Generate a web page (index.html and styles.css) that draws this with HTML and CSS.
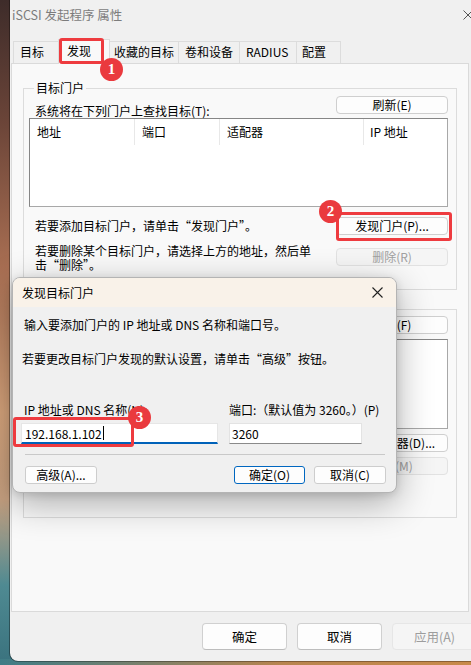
FILE: index.html
```html
<!DOCTYPE html>
<html lang="zh-CN">
<head>
<meta charset="utf-8">
<title>iSCSI 发起程序 属性</title>
<link rel="stylesheet" href="styles.css">
</head>
<body>
<div class="window">
  <div class="titlebar">
    <span class="title">iSCSI 发起程序 属性</span>
    <svg class="win-close" width="10" height="10" viewBox="0 0 10 10"><path d="M0.5 0.5 L9.5 9.5 M9.5 0.5 L0.5 9.5" stroke="#555" stroke-width="1" fill="none"/></svg>
  </div>
  <div class="tabs">
    <div class="tab t1">目标</div>
    <div class="tab t2 active">发现</div>
    <div class="tab t3">收藏的目标</div>
    <div class="tab t4">卷和设备</div>
    <div class="tab t5">RADIUS</div>
    <div class="tab t6">配置</div>
  </div>
  <div class="panel">
    <fieldset class="group g1">
      <legend>目标门户</legend>
      <div class="row top-row">
        <span class="label">系统将在下列门户上查找目标(T):</span>
        <button class="btn side-btn up">刷新(E)</button>
      </div>
      <div class="listbox lb1">
        <div class="lhead">
          <span class="col c1">地址</span>
          <span class="col c2">端口</span>
          <span class="col c3">适配器</span>
          <span class="col c4">IP 地址</span>
        </div>
      </div>
      <div class="row act-row">
        <span class="label">若要添加目标门户，请单击“发现门户”。</span>
        <button class="btn side-btn">发现门户(P)...</button>
      </div>
      <div class="row act-row del-row">
        <span class="label wrap">若要删除某个目标门户，请选择上方的地址，然后单击“删除”。</span>
        <button class="btn side-btn disabled">删除(R)</button>
      </div>
    </fieldset>
    <div class="group g2">
      <div class="row top-row">
        <span class="label"></span>
        <button class="btn side-btn">刷新(F)</button>
      </div>
      <div class="listbox lb2"></div>
      <div class="row act-row">
        <span class="label"></span>
        <button class="btn side-btn">添加服务器(D)...</button>
      </div>
      <div class="row act-row del-row2">
        <span class="label"></span>
        <button class="btn side-btn disabled">删除(M)</button>
      </div>
    </div>
  </div>
  <div class="footer">
    <button class="fbtn">确定</button>
    <button class="fbtn">取消</button>
    <button class="fbtn disabled">应用(A)</button>
  </div>

  <div class="dialog">
    <div class="dtitle">
      <span>发现目标门户</span>
      <svg class="dclose" width="11" height="11" viewBox="0 0 11 11"><path d="M0.5 0.5 L10.5 10.5 M10.5 0.5 L0.5 10.5" stroke="#222" stroke-width="1.1" fill="none"/></svg>
    </div>
    <div class="dbody">
      <p class="dtext t-a">输入要添加门户的 IP 地址或 DNS 名称和端口号。</p>
      <p class="dtext t-b">若要更改目标门户发现的默认设置，请单击“高级”按钮。</p>
      <div class="fields">
        <div class="field f-ip">
          <span class="flabel">IP 地址或 DNS 名称(N):</span>
          <div class="input active-input">192.168.1.102<span class="caret"></span></div>
        </div>
        <div class="field f-port">
          <span class="flabel">端口:（默认值为 3260。）(P)</span>
          <div class="input">3260</div>
        </div>
      </div>
      <div class="sep"></div>
      <div class="dbtns">
        <button class="dbtn">高级(A)...</button>
        <span class="grow"></span>
        <button class="dbtn default">确定(O)</button>
        <button class="dbtn">取消(C)</button>
      </div>
    </div>
  </div>

  <div class="mark box1"></div>
  <div class="mark box2"></div>
  <div class="mark box3"></div>
  <div class="badge b1">1</div>
  <div class="badge b2">2</div>
  <div class="badge b3">3</div>
</div>
</body>
</html>
```
FILE: styles.css
```css
html, body {
  margin: 0;
  padding: 0;
  width: 471px;
  height: 665px;
  overflow: hidden;
}
body {
  font-family: "Noto Sans CJK SC", "Liberation Sans", sans-serif;
  font-size: 12px;
  color: #000;
  background:
    linear-gradient(to right, #3f7c86 0%, #6f7f70 25%, #b8844e 60%, #c98a4a 100%) bottom / 100% 6px no-repeat,
    linear-gradient(to bottom, #3e2c2a 0%, #6a4438 18%, #a86e52 40%, #d6a47c 62%, #c6a080 75%, #4f8a92 88%, #3a727e 100%);
}
button {
  font-family: inherit;
  font-size: 12px;
  color: #000;
  padding: 0;
  margin: 0;
  cursor: default;
}
.window {
  position: relative;
  margin-left: 10px;
  width: 481px;
  height: 661px;
  background: #f0f0f0;
  border-bottom-left-radius: 8px;
  box-shadow: -1px 0 0 rgba(0,0,0,0.35), 0 1px 0 rgba(0,0,0,0.3);
  display: flex;
  flex-direction: column;
}
.titlebar {
  height: 41px;
  display: flex;
  align-items: flex-start;
  padding-left: 2px;
}
.title {
  line-height: 30px;
  color: #7c7c7c;
  font-size: 12.5px;
  flex: 1;
}
.win-close {
  margin: 10px 18px 0 0;
}
.tabs {
  display: flex;
  align-items: flex-end;
  height: 22px;
  padding-left: 3px;
}
.tab {
  box-sizing: border-box;
  height: 22px;
  line-height: 20px;
  border: 1px solid #dcdcdc;
  border-bottom: none;
  background: #f0f0f0;
  padding-left: 6px;
  margin-right: -1px;
  white-space: nowrap;
}
.t1 { width: 46px; }
.t2 { width: 52px; }
.t3 { width: 70px; padding-left: 4px; }
.t4 { width: 62px; }
.t5 { width: 58px; }
.t6 { width: 45px; padding-left: 5px; }
.tab.active {
  height: 25px;
  margin-bottom: -1px;
  background: #f9f9f9;
  position: relative;
  z-index: 1;
  padding-left: 8px;
  line-height: 22px;
}
.panel {
  box-sizing: border-box;
  margin-left: 1px;
  width: 458px;
  height: 549px;
  border: 1px solid #dadada;
  background: #f9f9f9;
  padding: 17px 11px 0;
}
.group {
  margin: 0;
  border: 1px solid #dcdcdc;
  padding: 1px 8px 0 5px;
  min-width: 0;
}
.group legend {
  padding: 0 2px;
  margin-left: 5px;
  line-height: 14px;
}
.g1 {
  height: 209px;
  box-sizing: border-box;
}
.g2 {
  margin-top: 19px;
  height: 209px;
  box-sizing: border-box;
  padding-top: 6px;
}
.row {
  display: flex;
  justify-content: space-between;
}
.label {
  padding-left: 6px;
  line-height: 14px;
  white-space: nowrap;
}
.label.wrap {
  white-space: normal;
  width: 278px;
}
.top-row {
  align-items: flex-end;
  height: 22px;
}
.top-row .btn {
  margin-bottom: 4px;
}
.btn {
  box-sizing: border-box;
  width: 112px;
  height: 18px;
  line-height: 16px;
  background: #fdfdfd;
  border: 1px solid #cfcfcf;
  border-radius: 4px;
}
.btn.disabled {
  color: #a0a0a0;
  background: #f5f5f5;
  border-color: #e2e2e2;
}
.listbox {
  box-sizing: border-box;
  height: 89px;
  background: #fff;
  border: 1px solid #868686;
  border-right-color: #a8a8a8;
  border-bottom-color: #a8a8a8;
}
.lb2 { height: 90px; margin-top: 1px; }
.lhead {
  display: flex;
  height: 26px;
}
.col {
  box-sizing: border-box;
  padding-left: 7px;
  line-height: 26px;
  border-right: 1px solid #e8e8e8;
}
.c1 { width: 105px; }
.c2 { width: 85px; }
.c3 { width: 144px; }
.c4 { flex: 1; border-right: none; padding-left: 6px; }
.act-row {
  margin-top: 10px;
  align-items: center;
}
.act-row .label {
  line-height: 18px;
}
.del-row {
  margin-top: 9px;
  align-items: flex-start;
}
.del-row .btn { margin-top: 4px; }
.del-row .label.wrap { line-height: 14px; }
.g2 .act-row { margin-top: 5px; }
.del-row2 {
  margin-top: 12px;
}
.footer {
  display: flex;
  justify-content: flex-end;
  gap: 10px;
  padding: 11px 14px 0 0;
}
.fbtn {
  box-sizing: border-box;
  width: 85px;
  height: 27px;
  background: #fdfdfd;
  border: 1px solid #d0d0d0;
  border-bottom-color: #bdbdbd;
  border-radius: 4px;
  font-size: 12.5px;
}
.fbtn.disabled {
  background: #f5f5f5;
  border-color: #e6e6e6;
  color: #9d9d9d;
}

/* dialog overlay */
.dialog {
  position: absolute;
  left: 2px;
  top: 277px;
  width: 385px;
  height: 216px;
  box-sizing: border-box;
  border: 1px solid #b4b4b4;
  border-radius: 8px;
  background: #f0f0f0;
  box-shadow: 0 10px 36px rgba(0,0,0,0.32), 0 2px 8px rgba(0,0,0,0.12);
  overflow: hidden;
  z-index: 5;
}
.dtitle {
  height: 29px;
  background: #f9f2e9;
  display: flex;
  align-items: center;
  padding: 0 9px;
  line-height: 16px;
}
.dtitle span { flex: 1; }
.dclose { margin-right: 4px; }
.dbody {
  padding: 0 10px 0 8px;
}
.dtext {
  margin: 0;
  line-height: 16px;
}
.t-a { margin-top: 10px; padding-left: 3px; }
.t-b { margin-top: 18px; padding-left: 1px; }
.fields {
  display: flex;
  gap: 11px;
  margin-top: 35px;
}
.field {
  display: flex;
  flex-direction: column;
  gap: 5px;
}
.flabel {
  line-height: 16px;
  padding-left: 3px;
  white-space: nowrap;
}
.f-port .flabel { padding-left: 0; }
.f-ip { width: 197px; }
.f-port { width: 133px; }
.input {
  box-sizing: border-box;
  height: 21px;
  background: #fff;
  border: 1px solid #e3e3e3;
  border-bottom-color: #8a8a8a;
  line-height: 19px;
  padding-left: 2px;
  display: flex;
  align-items: center;
}
.active-input {
  border-color: #e6e6e6;
  border-bottom: 2px solid #0062b9;
  padding-left: 3px;
}
.caret {
  display: inline-block;
  width: 1px;
  height: 14px;
  background: #000;
  margin-left: 1px;
}
.sep {
  height: 1px;
  background: #c9c9c9;
  margin: 10px 0 0 4px;
  width: 360px;
}
.dbtns {
  display: flex;
  gap: 9px;
  margin-top: 11px;
  padding-left: 4px;
}
.grow { flex: 1; }
.dbtn {
  box-sizing: border-box;
  width: 72px;
  height: 18px;
  line-height: 16px;
  background: #fdfdfd;
  border: 1px solid #cdcdcd;
  border-radius: 3px;
}
.dbtn.default {
  border-color: #0067c0;
  width: 71px;
}

/* annotations */
.mark {
  position: absolute;
  box-sizing: border-box;
  border: 3px solid #ee3b3f;
  border-radius: 3px;
  z-index: 8;
}
.box1 { left: 49px; top: 38px; width: 45px; height: 26px; }
.box2 { left: 326px; top: 212px; width: 116px; height: 29px; }
.box3 { left: 3px; top: 417px; width: 121px; height: 30px; }
.badge {
  position: absolute;
  width: 23px;
  height: 23px;
  border-radius: 50%;
  background: #ea3a3e;
  color: #fff;
  font-family: "Liberation Serif", "DejaVu Serif", serif;
  font-weight: bold;
  font-size: 15px;
  line-height: 23px;
  text-align: center;
  z-index: 9;
}
.b1 { left: 90px; top: 58px; }
.b2 { left: 309px; top: 200px; }
.b3 { left: 118px; top: 406px; }
```
